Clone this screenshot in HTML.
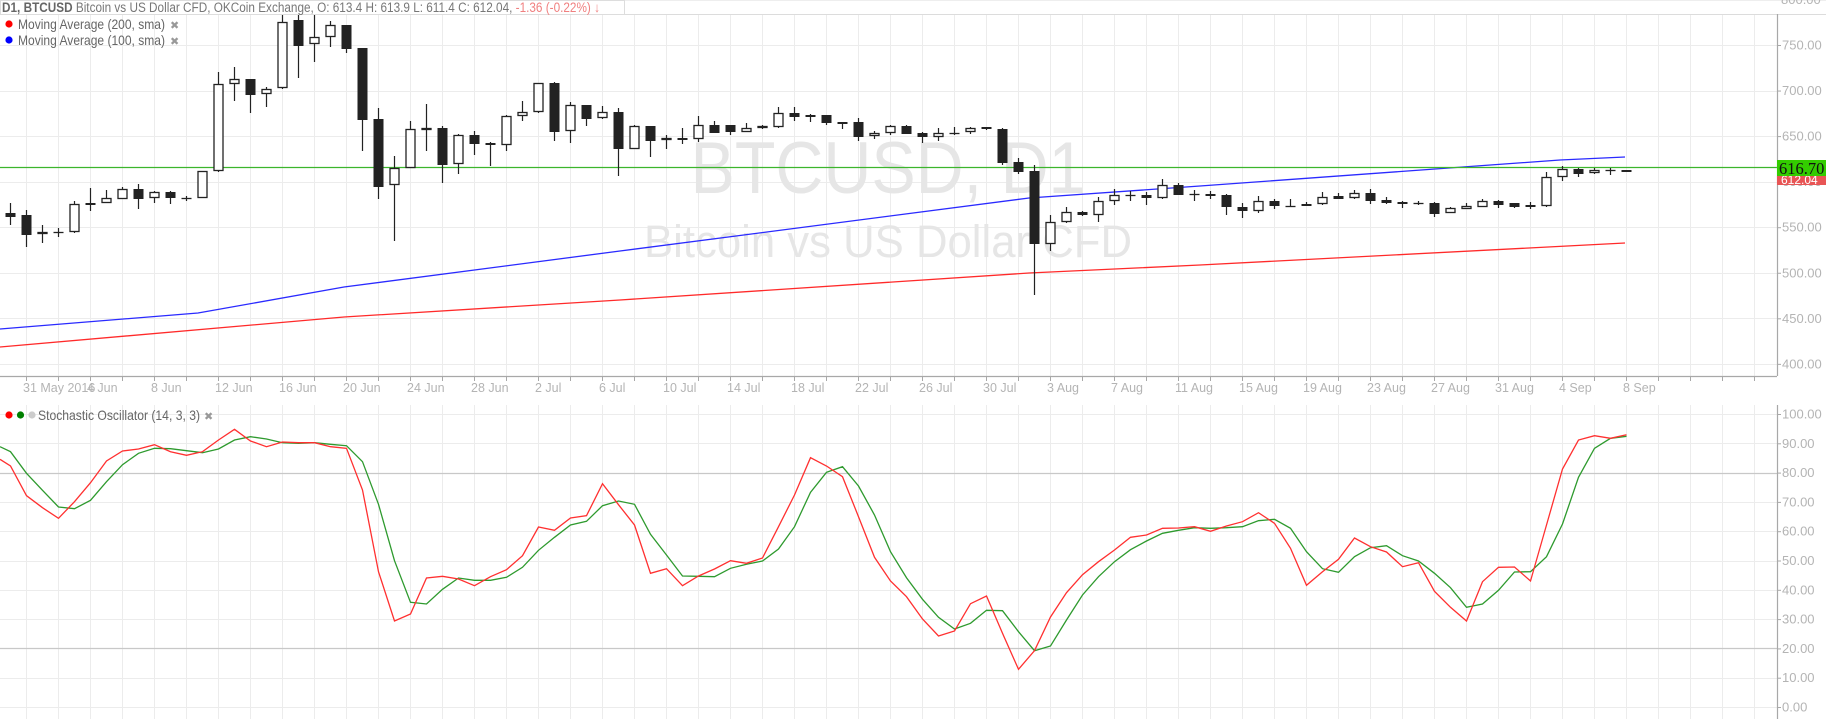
<!DOCTYPE html>
<html><head><meta charset="utf-8">
<style>
html,body{margin:0;padding:0;background:#fff;}
body{width:1826px;height:719px;overflow:hidden;}
svg{display:block;font-family:"Liberation Sans",sans-serif;}
</style></head>
<body>
<svg id="c" width="1826" height="719" xmlns="http://www.w3.org/2000/svg"></svg>
<script>
var s='';
function L(x1,y1,x2,y2,c,w){s+='<line x1="'+x1+'" y1="'+y1+'" x2="'+x2+'" y2="'+y2+'" stroke="'+c+'" stroke-width="'+(w||1)+'"/>';}
function T(x,y,t,a){s+='<text x="'+x+'" y="'+y+'" '+(a||'')+'>'+t+'</text>';}
// vertical gridlines
for(var x=26;x<1777;x+=32){L(x+.5,14,x+.5,376,'#ececec');L(x+.5,405,x+.5,719,'#ececec');}
// price horizontal grid
for(var p=750;p>=400;p-=50){var y=Math.round(45+(750-p)*0.911)+.5;L(0,y,1777,y,'#ececec');}
// top border
L(0,14.5,1826,14.5,'#dcdcdc');L(0,0.5,1826,0.5,'#eee');
// stoch grid
for(var k=0;k<=10;k++){var y=Math.round(414+k*29.3)+.5;L(0,y,1777,y,(k==2||k==8)?'#c8c8c8':'#ececec',(k==2||k==8)?1.3:1);}
// watermark
T(888,193,'BTCUSD, D1','font-size="73" fill="#e6e6e6" text-anchor="middle" textLength="395" lengthAdjust="spacingAndGlyphs"');
T(888,257,'Bitcoin vs US Dollar CFD','font-size="45" fill="#e6e6e6" text-anchor="middle" textLength="488" lengthAdjust="spacingAndGlyphs"');
// MAs
s+='<polyline fill="none" stroke="#2a2aff" stroke-width="1.3" points="0,329 198,313 344,287 620,251 1029,198 1200,186 1560,160 1625,157"/>';
s+='<polyline fill="none" stroke="#ff2a2a" stroke-width="1.3" points="0,347 344,317 620,300 1029,273 1200,265 1625,243"/>';
// green price line
L(0,167.5,1777,167.5,'#3cb52c',1.2);
// candles
var C=[['f',203,213,217,225],['f',210,215,235,247],['h',225,232,234,243],['c',228,232,232,237],['h',201,204,232,233],['f',188,203,204,211],['h',190,198,203,203],['h',187,189,199,199],['f',184,189,199,209],['h',191,192,198,203],['f',191,192,198,204],['c',196,198,198,201],['h',171,171,198,198],['h',72,84,171,172],['h',67,79,84,101],['f',79,79,95,113],['h',87,89,94,107],['h',15,22,88,89],['f',15,20,46,78],['h',15,37,44,62],['h',21,25,37,47],['f',25,25,49,53],['f',48,48,120,151],['f',108,119,187,199],['h',156,168,185,241],['h',121,129,168,168],['h',104,128,130,151],['f',126,128,165,183],['h',134,135,164,174],['f',131,135,144,155],['f',142,143,145,166],['h',115,116,145,151],['h',101,112,116,121],['h',83,83,112,113],['f',82,83,132,141],['h',102,105,131,143],['f',105,105,119,126],['h',106,112,118,119],['f',108,112,149,176],
['h',125,126,149,149],['f',126,126,141,157],['h',135,138,140,149],['f',128,138,139,144],['h',116,125,139,142],['f',121,125,133,133],['f',125,125,132,135],['h',123,128,132,132],['h',125,126,128,129],['h',107,113,127,128],['f',107,113,117,121],['f',114,115,117,122],['f',115,115,123,125],['f',122,122,124,129],['f',118,122,137,141],['h',131,133,136,139],['h',125,126,133,135],['f',125,126,134,134],['f',132,133,137,143],['h',128,133,137,141],['c',127,133,133,135],['h',127,128,132,134],['f',127,127,129,130],['f',128,129,163,165],['f',158,162,172,174],['f',165,171,244,295],['h',215,222,244,251],['h',207,212,222,223],['f',211,212,215,216],['h',197,201,215,222],['h',189,195,201,205],['c',191,195,195,201],['f',192,195,198,205],['h',179,185,198,199],['f',183,185,195,195],['c',190,194,194,201],['f',191,194,196,199],['f',194,195,207,215],
['f',203,207,211,218],['h',196,201,211,213],['f',199,201,206,209],['c',199,206,206,207],['f',202,204,206,206],['h',192,197,204,205],['f',193,196,199,199],['h',190,193,198,199],['f',189,193,201,204],['f',197,200,203,204],['f',201,202,204,208],['c',201,203,203,205],['f',202,203,214,217],['h',207,208,213,213],['h',203,206,209,209],['h',199,201,207,207],['f',200,201,205,208],['f',203,203,207,208],['f',202,205,207,209],['h',172,177,206,207],['h',166,169,177,181],['f',168,169,174,177],['h',168,170,173,174],['c',168,170,170,175],['f',170,170,172,172]];
for(var i=0;i<C.length;i++){var c=C[i],cx=26+16*(i-1)+.5;
 L(cx,c[1],cx,c[4],'#222',1.2);
 if(c[0]=='c'){L(cx-5,c[2]+.5,cx+5,c[2]+.5,'#222',1.3);}
 else if(c[0]=='f'){var h=Math.max(c[3]-c[2],2);s+='<rect x="'+(cx-5)+'" y="'+c[2]+'" width="10" height="'+h+'" fill="#222"/>';}
 else{var h=Math.max(c[3]-c[2],2);s+='<rect x="'+(cx-4.5)+'" y="'+(c[2]+.5)+'" width="9" height="'+(h-1)+'" fill="#fff" stroke="#222" stroke-width="1.3"/>';}
}
// stoch
var R=[198,287,323,355,305,248,183,153,147,134,155,166,155,120,88,123,140,126,128,128,140,145,270,515,663,642,534,529,537,557,530,509,467,381,391,354,347,251,314,375,520,506,557,528,507,482,490,474,380,285,173,198,230,350,472,543,590,657,708,693,611,588,700,808,752,651,578,524,485,450,412,405,385,384,380,394,378,365,338,370,445,556,515,478,414,440,456,500,488,574,622,663,545,502,501,543,375,207,120,107,115,104];
var G=[155,220,271,321,326,301,245,194,160,145,146,152,158,147,120,110,117,128,130,128,133,137,185,313,482,607,612,568,534,541,541,532,502,451,412,375,364,317,303,313,403,465,528,529,530,505,493,483,447,380,277,217,200,258,345,455,533,598,652,687,670,631,632,695,752,738,660,585,530,485,449,423,400,391,383,385,383,380,362,358,385,455,506,517,470,443,437,467,483,520,563,622,612,571,516,515,470,372,232,145,115,109];
function P(a,y0){var p='0,'+(400+y0/3).toFixed(1);for(var i=0;i<a.length;i++){p+=' '+(26+16*(i-1)+.5)+','+(400+a[i]/3).toFixed(1);}return p;}
s+='<polyline fill="none" stroke="#2e9a2e" stroke-width="1.3" points="'+P(G,140)+'"/>';
s+='<polyline fill="none" stroke="#ff3030" stroke-width="1.3" points="'+P(R,178)+'"/>';
// axes
L(0,376.5,1777,376.5,'#a8a8a8',1.2);
for(var x=26;x<1777;x+=32)L(x+.5,376,x+.5,381,'#a8a8a8');
L(1777.5,14,1777.5,376,'#a8a8a8',1.2);L(1777.5,405,1777.5,719,'#a8a8a8',1.2);
var D=['31 May 2016','4 Jun','8 Jun','12 Jun','16 Jun','20 Jun','24 Jun','28 Jun','2 Jul','6 Jul','10 Jul','14 Jul','18 Jul','22 Jul','26 Jul','30 Jul','3 Aug','7 Aug','11 Aug','15 Aug','19 Aug','23 Aug','27 Aug','31 Aug','4 Sep','8 Sep'];
for(var k=0;k<D.length;k++)T(26+64*k-3,392,D[k],'font-size="12.5" fill="#b4b4b4"');
T(1781,4,'800.00','font-size="13" fill="#b4b4b4"');
for(var p=750;p>=400;p-=50){var y=45+(750-p)*0.911;L(1777,y+.5,1781,y+.5,'#a8a8a8');T(1782,y+4.5,p+'.00','font-size="13" fill="#b4b4b4"');}
for(var k=0;k<=10;k++){var y=414+k*29.3;L(1777,y+.5,1781,y+.5,'#a8a8a8');T(1782,y+4.5,(100-k*10).toFixed(2),'font-size="13" fill="#b4b4b4"');}
s+='<rect x="1777" y="175" width="49" height="10" fill="#e85555"/>';
T(1781,184,'612.04','font-size="12" fill="#fff"');
s+='<rect x="1777" y="160" width="49" height="16" fill="#33cc00"/>';
T(1779,174,'616.70','font-family="Liberation Serif,serif" font-size="16.5" fill="#111"');
// header
s+='<rect x="0.5" y="0.5" width="624" height="14" fill="#fff" stroke="#ddd"/>';
s+='<text x="2" y="12" font-size="13.5" fill="#777" textLength="598" lengthAdjust="spacingAndGlyphs"><tspan font-weight="bold" fill="#666">D1, BTCUSD</tspan> Bitcoin vs US Dollar CFD, OKCoin Exchange, O: 613.4 H: 613.9 L: 611.4 C: 612.04, <tspan fill="#f08080">-1.36 (-0.22%) ↓</tspan></text>';
// legends
function leg(y,cols,tx,t,w,xx){for(var i=0;i<cols.length;i++)s+='<circle cx="'+(9+i*11.5)+'" cy="'+y+'" r="3.6" fill="'+cols[i]+'"/>';T(tx,y+5,t,'font-size="14" fill="#666" textLength="'+w+'" lengthAdjust="spacingAndGlyphs"');T(xx,y+5,'✖','font-size="11" fill="#999"');}
leg(24,['#ff0000'],18,'Moving Average (200, sma)',147,170);
leg(40,['#0000ff'],18,'Moving Average (100, sma)',147,170);
leg(415,['#ff0000','#008000','#cccccc'],38,'Stochastic Oscillator (14, 3, 3)',162,204);
document.getElementById('c').innerHTML=s;
</script>
</body></html>
